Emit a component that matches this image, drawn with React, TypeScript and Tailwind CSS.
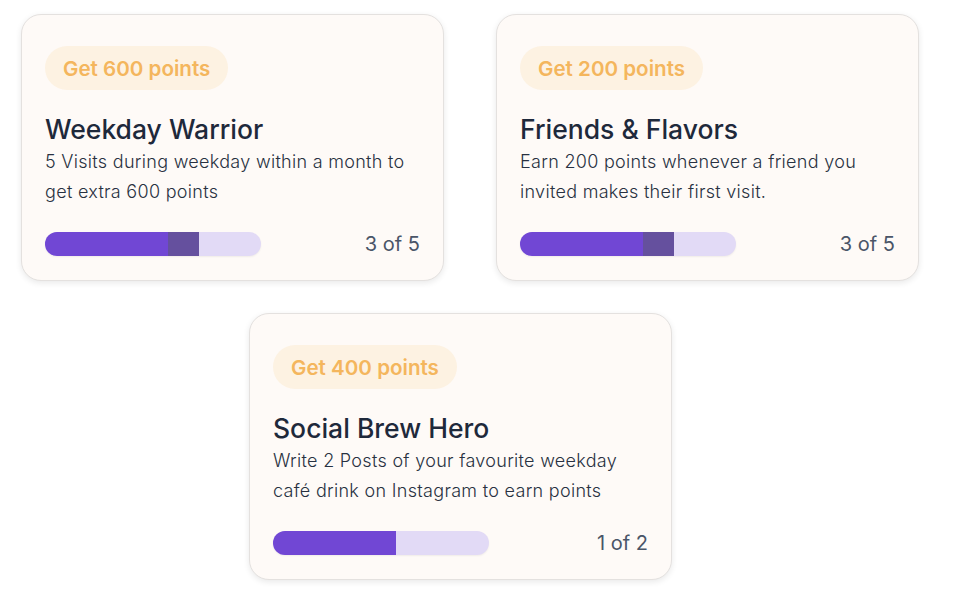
const challenges = [
  {
    points: 600,
    title: 'Weekday Warrior',
    desc: ['5 Visits during weekday within a month to', 'get extra 600 points'],
    done: 3,
    total: 5,
    extra: true,
  },
  {
    points: 200,
    title: 'Friends & Flavors',
    desc: ['Earn 200 points whenever a friend you', 'invited makes their first visit.'],
    done: 3,
    total: 5,
    extra: true,
  },
  {
    points: 400,
    title: 'Social Brew Hero',
    desc: ['Write 2 Posts of your favourite weekday', 'café drink on Instagram to earn points'],
    done: 1,
    total: 2,
    extra: false,
  },
];

type Challenge = (typeof challenges)[number];

function ChallengeCard({ c }: { c: Challenge }) {
  return (
    <div className="w-[423px] h-[267px] shrink-0 rounded-[20px] border border-[#e4e1df] bg-[#fefaf7] shadow-[0_2px_6px_rgba(0,0,0,0.09)] px-[23px] pt-[31px]">
      <span className="inline-flex h-[44px] items-center rounded-full bg-[#fdf2e2] px-[18px] pt-[2px] text-[20.6px] font-semibold text-[#f4b65d]">
        Get {c.points} points
      </span>
      <h3 className="mt-[23px] text-[26.5px] leading-[32px] font-medium text-[#1e293b]">{c.title}</h3>
      <p className="mt-[2px] text-[18px] leading-[30px] font-light tracking-[0.3px] text-[#283141]">
        {c.desc[0]}
        <br />
        {c.desc[1]}
      </p>
      <div className="mt-[22px] flex items-center justify-between">
        <div className="flex h-[24px] w-[216px] overflow-hidden rounded-full bg-[#e2daf6] shadow-[0_1px_2px_rgba(0,0,0,0.06)]">
          <div className="h-full w-[123px] bg-[#7147d4]" />
          {c.extra && <div className="h-full w-[31px] bg-[#65509e]" />}
        </div>
        <span className="text-[20px] text-[#4a5568]">
          {c.done} of {c.total}
        </span>
      </div>
    </div>
  );
}

export default function App() {
  return (
    <div className="min-h-screen bg-white pl-[21px] pt-[14px] font-['Inter',sans-serif]">
      <div className="flex gap-[52px]">
        <ChallengeCard c={challenges[0]} />
        <ChallengeCard c={challenges[1]} />
      </div>
      <div className="mt-[32px] ml-[228px] flex">
        <ChallengeCard c={challenges[2]} />
      </div>
    </div>
  );
}
